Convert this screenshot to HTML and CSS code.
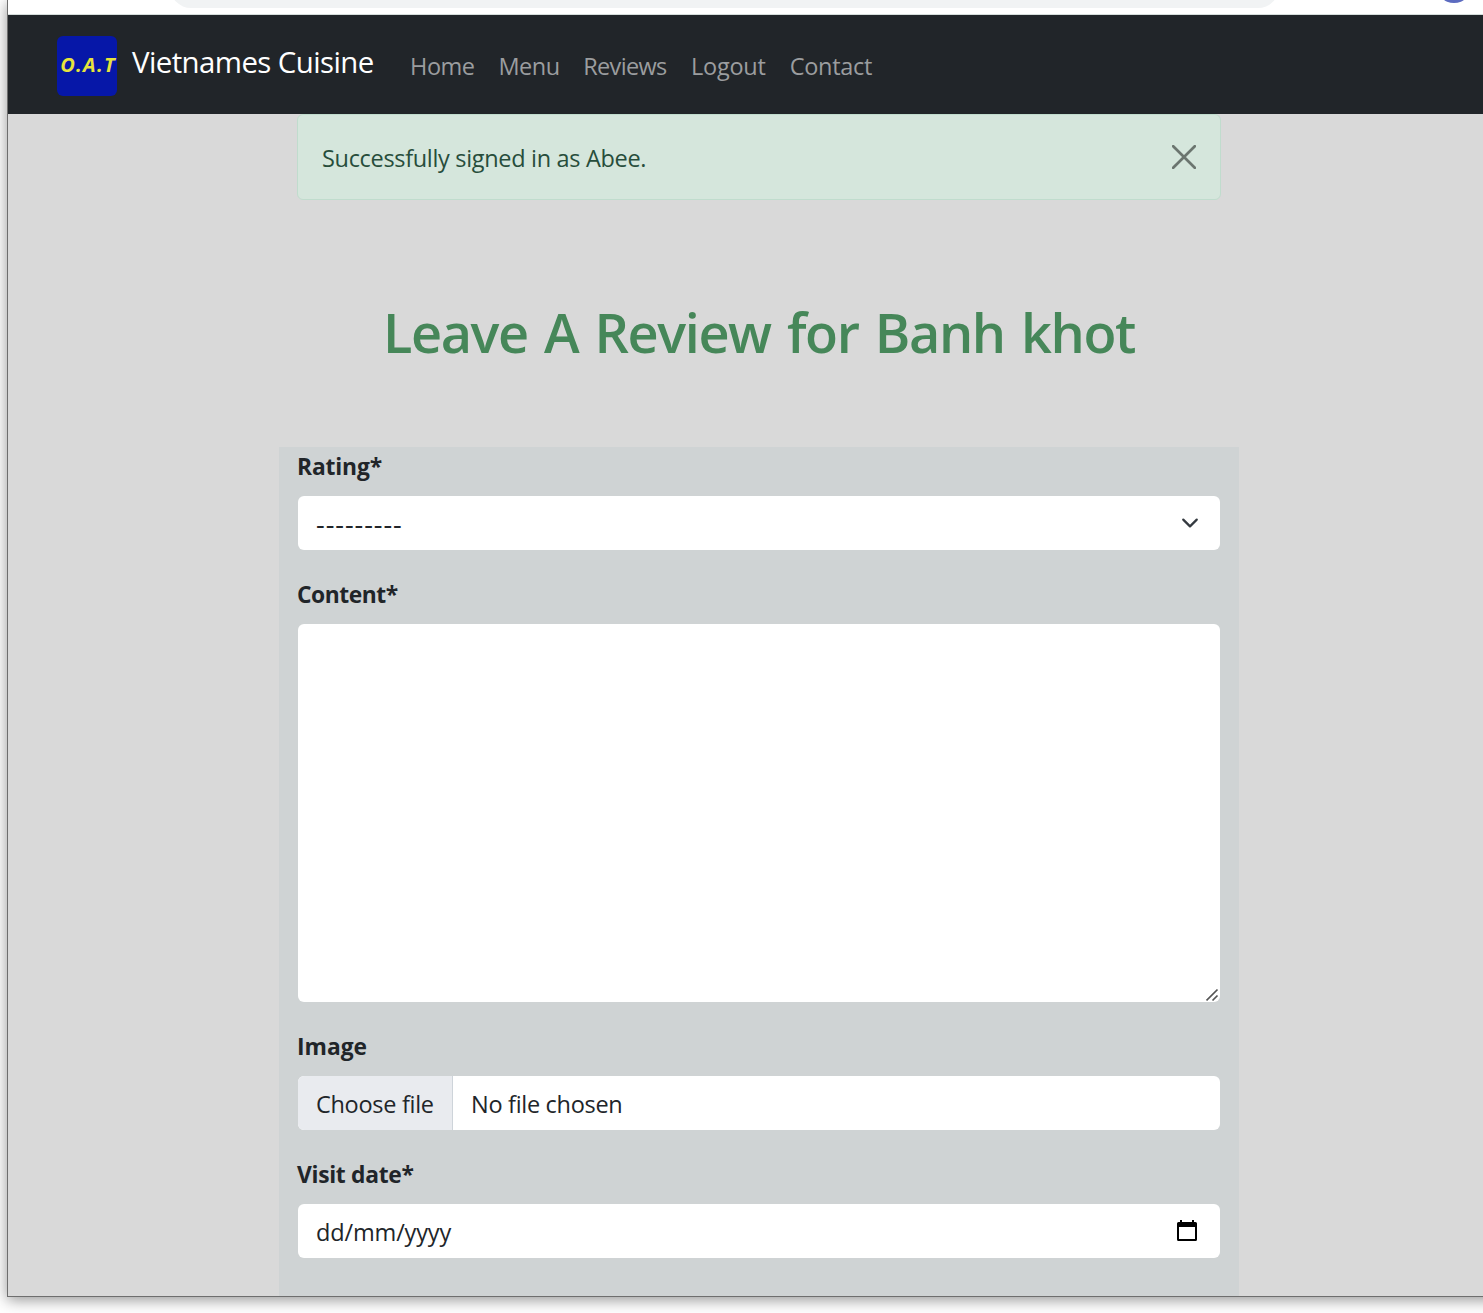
FILE: index.html
```html
<!DOCTYPE html>
<html lang="en">
<head>
<meta charset="utf-8">
<title>Vietnames Cuisine</title>
<link rel="stylesheet" href="styles.css">
</head>
<body>
<div class="window">
  <div class="browser-bar">
    <div class="address"></div>
    <div class="profile"></div>
  </div>
  <nav class="navbar">
    <div class="logo"><span>O.A.T</span></div>
    <a class="brand">Vietnames Cuisine</a>
    <div class="links">
      <a class="home">Home</a><a class="menu">Menu</a><a class="reviews">Reviews</a><a class="logout">Logout</a><a class="contact">Contact</a>
    </div>
  </nav>
  <main>
    <div class="alert">
      <span class="alert-text">Successfully signed in as Abee.</span>
      <svg class="close" viewBox="0 0 24 24" width="24" height="24"><path d="M1.200 1.200 22.800 22.800M22.800 1.200 1.200 22.800" fill="none" stroke="#6b756f" stroke-width="2.700" stroke-linecap="round"/></svg>
    </div>
    <h1><span>Leave A Review for Banh khot</span></h1>
    <form class="form">
      <div class="field">
        <label><span class="l-rating">Rating*</span></label>
        <div class="control between">
          <span class="dashes">---------</span>
          <svg class="chevron" viewBox="0 0 16 16" width="18" height="18"><path d="m2 5 6 6 6-6" fill="none" stroke="#343a40" stroke-width="2" stroke-linecap="round" stroke-linejoin="round"/></svg>
        </div>
      </div>
      <div class="field">
        <label><span class="l-content">Content*</span></label>
        <div class="control area">
          <svg viewBox="0 0 14 14" width="14" height="14"><path d="M.5 12.500 11.500 1.500M6.500 12.500 11.500 7.500" fill="none" stroke="#555" stroke-width="1.700"/></svg>
        </div>
      </div>
      <div class="field">
        <label><span class="l-image">Image</span></label>
        <div class="control file">
          <div class="choose"><span class="choose-text">Choose file</span></div>
          <span class="nofile">No file chosen</span>
        </div>
      </div>
      <div class="field">
        <label><span class="l-date">Visit date*</span></label>
        <div class="control between">
          <span class="date">dd/mm/yyyy</span>
          <svg class="calendar" viewBox="0 0 20 22" width="20" height="22"><path d="M3 0h2v2h10V0h2v2h1.500Q20 2 20 3.500V19.500Q20 21 18.500 21H1.500Q0 21 0 19.500V3.500Q0 2 1.500 2H3ZM2 7V19H18V7Z" fill="#000" fill-rule="evenodd"/></svg>
        </div>
      </div>
    </form>
  </main>
</div>
</body>
</html>
```
FILE: styles.css
```css
* { box-sizing: border-box; }
html, body { height: 100%; }
body {
  margin: 0;
  padding: 0 0 16px 7px;
  overflow: hidden;
  background: #fff;
  color: #212529;
  font: 23.5px/36px "Open Sans", "Noto Sans", sans-serif;
}
span, a { white-space: nowrap; }
.window {
  width: 1500px;
  height: 1297px;
  display: flex;
  flex-direction: column;
  overflow: hidden;
  background: #d9d9d9;
  border-left: 1px solid #6e6e6e;
  border-bottom: 1px solid #6e6e6e;
  box-shadow: 0 3px 14px rgba(0, 0, 0, .42);
}
.browser-bar {
  height: 15px;
  flex: none;
  display: flex;
  overflow: hidden;
  background: #fff;
  border-bottom: 1px solid #d5dddb;
}
.address {
  width: 1109px;
  height: 42px;
  margin: -34px 0 0 162px;
  border-radius: 21px;
  background: #f1f3f4;
}
.profile {
  width: 36px;
  height: 36px;
  margin: -33px 0 0 157px;
  border-radius: 50%;
  background: #5c6bc0;
}
.navbar {
  height: 99px;
  flex: none;
  display: flex;
  align-items: center;
  padding-left: 49px;
  background: #212529;
}
.logo {
  width: 60px;
  height: 60px;
  margin-top: 2px;
  border-radius: 6px;
  display: flex;
  align-items: center;
  justify-content: center;
  background: #0617a8;
  color: #e6e43c;
  font: italic 700 20px/58px "Open Sans", sans-serif;
  letter-spacing: 1.3px;
  padding-left: 2px;
  overflow: hidden;
}
.logo span { margin-top: -2px; }
.brand {
  width: 242px;
  margin: -5px 36px 0 15px;
  color: #fff;
  font-size: 29.4px;
  letter-spacing: -.58px;
}
.links { display: flex; gap: 23.8px; margin-top: 2px; color: #9b9d9f; }
.links a { width: 64.6px; letter-spacing: -.45px; }
.links .menu { width: 61px; letter-spacing: -.5px; }
.links .reviews { width: 84px; letter-spacing: -.65px; }
.links .logout { width: 75px; letter-spacing: -.25px; }
.links .contact { letter-spacing: -.3px; }
main {
  width: 960px;
  height: 1182px;
  margin-left: 271px;
  display: flex;
  flex-direction: column;
}
.alert {
  width: 924px;
  height: 86px;
  flex: none;
  margin-left: 18px;
  padding: 0 24px;
  display: flex;
  align-items: center;
  justify-content: space-between;
  color: #274d3b;
  background: #d5e6dc;
  border: 1px solid #c0dccd;
  border-radius: 6px;
}
.alert-text { margin-top: 2px; letter-spacing: -.32px; }
h1 {
  height: 66px;
  flex: none;
  margin: 99px 0 82px;
  padding-left: 104px;
  color: #468759;
  font-size: 54px;
  line-height: 66px;
  font-weight: 600;
  letter-spacing: -1.4px;
  word-spacing: 3.6px;
}
.form {
  flex: 1;
  padding: 1px 19px 0;
  background: #cfd3d4;
}
.field { margin-bottom: 26px; }
label {
  display: block;
  height: 36px;
  margin: 0 0 12px -1px;
  padding-top: 1px;
  font-weight: 700;
  font-size: 22.8px;
}
.l-rating { letter-spacing: -.15px; }
.l-content { letter-spacing: -.45px; }
.l-date { letter-spacing: -.3px; }
.control {
  height: 54px;
  display: flex;
  align-items: center;
  overflow: hidden;
  background: #fff;
  border-radius: 6px;
}
.between { justify-content: space-between; padding: 0 21px 0 18px; }
.area { height: 378px; align-items: flex-end; justify-content: flex-end; }
.dashes { font-size: 27px; letter-spacing: .95px; margin-top: 1px; }
.choose {
  width: 155px;
  height: 54px;
  padding: 10px 0 0 18px;
  background: #e9ebef;
  border-right: 1px solid #ced4da;
}
.choose-text { letter-spacing: -.3px; }
.nofile { margin: 2px 0 0 18px; letter-spacing: -.3px; }
.date { margin-top: 2px; letter-spacing: -.15px; }
.calendar { margin-right: 2px; }
```
